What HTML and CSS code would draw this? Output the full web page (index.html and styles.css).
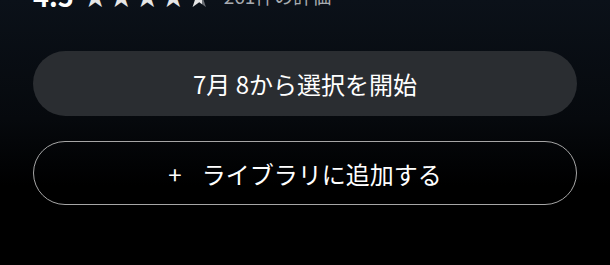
FILE: index.html
```html
<!DOCTYPE html>
<html lang="ja">
<head>
    <meta charset="UTF-8">
    <meta name="viewport" content="width=device-width, initial-scale=1.0">
    <title>ライブラリ</title>
    <link rel="stylesheet" href="styles.css">
</head>
<body>
    <div class="panel">
        <div class="rating">
            <span class="score">4.5</span>
            <span class="stars">★★★★<span class="half">★</span></span>
            <span class="count">261件の評価</span>
        </div>

        <button class="btn btn-start">7月 8から選択を開始</button>
        <button class="btn btn-add"><span class="plus">+</span>ライブラリに追加する</button>
    </div>
</body>
</html>
```

FILE: styles.css
```css
body {
    margin: 0;
    padding: 0;
    height: 265px;
    overflow: hidden;
    font-family: "Noto Sans CJK JP", "Noto Sans", sans-serif;
    background: linear-gradient(to bottom, #0b1119 0%, #06090d 45%, #000 70%);
    color: white;
}

.panel {
    display: flex;
    flex-direction: column;
    padding: 0 33px;
}

.rating {
    display: flex;
    align-items: center;
    gap: 10px;
    height: 28px;
    margin-top: -19px;
    margin-bottom: 42px;
}

.score {
    font-size: 27px;
    font-weight: bold;
}

.stars {
    font-size: 23px;
    color: #e6e6e6;
    letter-spacing: 3px;
}

.half {
    background: linear-gradient(to right, #e6e6e6 55%, #6b6f75 55%);
    -webkit-background-clip: text;
    background-clip: text;
    color: transparent;
}

.count {
    font-size: 19px;
    color: #a7abb0;
}

.btn {
    display: flex;
    justify-content: center;
    align-items: center;
    width: 100%;
    border-radius: 33px;
    font-family: inherit;
    font-size: 24px;
    color: white;
    cursor: pointer;
    outline: none;
}

.btn-start {
    height: 65px;
    border: none;
    background-color: #2a2d31;
    margin-bottom: 25px;
}

.btn-add {
    height: 64px;
    border: 1.5px solid #a6a6a6;
    background-color: transparent;
}

.plus {
    font-size: 24px;
    margin-right: 20px;
}
```
